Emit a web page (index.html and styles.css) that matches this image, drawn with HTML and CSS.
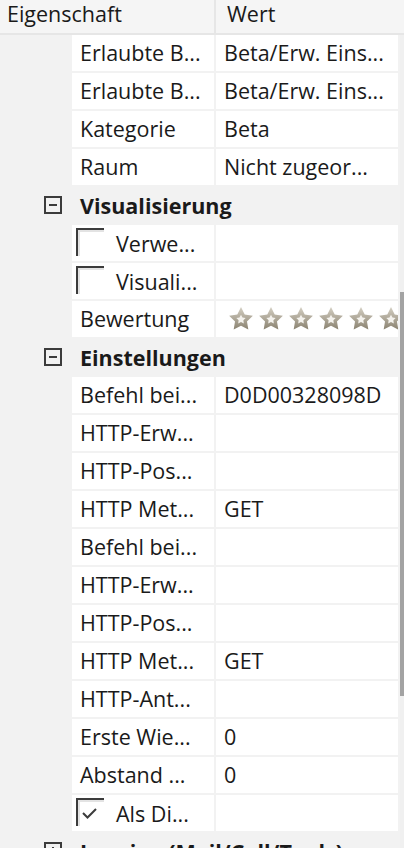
FILE: index.html
```html
<!DOCTYPE html>
<html lang="de">
<head>
<meta charset="utf-8">
<title>Eigenschaften</title>
<link rel="stylesheet" href="styles.css">
</head>
<body>
<div class="grid">
  <div class="header">
    <div class="h-name">Eigenschaft</div>
    <div class="h-val">Wert</div>
  </div>
  <div class="main">
    <div class="rows">
      <div class="row"><div class="name">Erlaubte B...</div><div class="val">Beta/Erw. Eins...</div></div>
      <div class="row"><div class="name">Erlaubte B...</div><div class="val">Beta/Erw. Eins...</div></div>
      <div class="row"><div class="name">Kategorie</div><div class="val">Beta</div></div>
      <div class="row"><div class="name">Raum</div><div class="val">Nicht zugeor...</div></div>
      <div class="group"><span class="toggle minus"></span><span class="gtitle">Visualisierung</span></div>
      <div class="row"><div class="name check-name"><span class="cb"></span><span>Verwe...</span></div><div class="val"></div></div>
      <div class="row"><div class="name check-name"><span class="cb"></span><span>Visuali...</span></div><div class="val"></div></div>
      <div class="row"><div class="name">Bewertung</div><div class="val stars">
        <svg class="star" viewBox="0 0 24 24"><use href="#st"/></svg>
        <svg class="star" viewBox="0 0 24 24"><use href="#st"/></svg>
        <svg class="star" viewBox="0 0 24 24"><use href="#st"/></svg>
        <svg class="star" viewBox="0 0 24 24"><use href="#st"/></svg>
        <svg class="star" viewBox="0 0 24 24"><use href="#st"/></svg>
        <svg class="star" viewBox="0 0 24 24"><use href="#st"/></svg>
      </div></div>
      <div class="group"><span class="toggle minus"></span><span class="gtitle">Einstellungen</span></div>
      <div class="row"><div class="name">Befehl bei...</div><div class="val">D0D00328098D</div></div>
      <div class="row"><div class="name">HTTP-Erw...</div><div class="val"></div></div>
      <div class="row"><div class="name">HTTP-Pos...</div><div class="val"></div></div>
      <div class="row"><div class="name">HTTP Met...</div><div class="val">GET</div></div>
      <div class="row"><div class="name">Befehl bei...</div><div class="val"></div></div>
      <div class="row"><div class="name">HTTP-Erw...</div><div class="val"></div></div>
      <div class="row"><div class="name">HTTP-Pos...</div><div class="val"></div></div>
      <div class="row"><div class="name">HTTP Met...</div><div class="val">GET</div></div>
      <div class="row"><div class="name">HTTP-Ant...</div><div class="val"></div></div>
      <div class="row"><div class="name">Erste Wie...</div><div class="val">0</div></div>
      <div class="row"><div class="name">Abstand ...</div><div class="val">0</div></div>
      <div class="row"><div class="name check-name"><span class="cb checked"><svg viewBox="0 0 28 28"><path d="M7 15 L11.5 19.5 L20 11" fill="none" stroke="#3c3c3c" stroke-width="2"/></svg></span><span>Als Di...</span></div><div class="val"></div></div>
      <div class="group"><span class="toggle plus"></span><span class="gtitle">Logging (Mail/Call/Tools)</span></div>
    </div>
    <div class="scrollbar"><div class="thumb"></div></div>
  </div>
</div>
<svg class="defs" width="0" height="0">
  <defs>
    <linearGradient id="sg" x1="0" y1="0" x2="0" y2="1">
      <stop offset="0" stop-color="#d4cfc3"/>
      <stop offset="1" stop-color="#8a8270"/>
    </linearGradient>
    <g id="st">
      <path d="M12 1 L15.41 7.81 L22.94 8.95 L17.52 14.29 L18.76 21.8 L12 18.3 L5.24 21.8 L6.48 14.29 L1.06 8.95 L8.59 7.81 Z" fill="url(#sg)"/>
      <path d="M12 8 L13.4 10.6 L16.3 11.1 L14.2 13.2 L14.6 16.1 L12 14.8 L9.4 16.1 L9.8 13.2 L7.7 11.1 L10.6 10.6 Z" fill="#f4f2ed"/>
    </g>
  </defs>
</svg>
</body>
</html>
```
FILE: styles.css
```css
html, body {
  margin: 0;
  padding: 0;
  background: #f3f3f3;
}
body {
  width: 404px;
  height: 848px;
  overflow: hidden;
  font-family: "Open Sans", "Noto Sans", sans-serif;
  font-size: 21.5px;
  color: #1a1a1a;
}
.grid {
  display: flex;
  flex-direction: column;
  height: 848px;
}
.header {
  display: grid;
  grid-template-columns: 216px 188px;
  height: 33px;
  border-bottom: 2px solid #e6e6e6;
  background: #f5f5f5;
  flex: none;
}
.h-name {
  padding-left: 7px;
  line-height: 28px;
  border-right: 2px solid #e6e6e6;
}
.h-val {
  padding-left: 11px;
  line-height: 28px;
}
.main {
  display: flex;
  flex: 1;
  min-height: 0;
}
.rows {
  width: 398px;
  padding-right: 2px;
  display: flex;
  flex-direction: column;
  gap: 2px;
  background: #f2f2f2;
  overflow: hidden;
}
.row {
  display: grid;
  grid-template-columns: 72px 144px 182px;
  height: 36px;
  flex: none;
}
.row .name {
  grid-column: 2;
  margin-right: 2px;
  background: #fff;
  padding-left: 8px;
  line-height: 35px;
  white-space: nowrap;
  overflow: hidden;
}
.row .val {
  grid-column: 3;
  background: #fff;
  padding-left: 8px;
  line-height: 35px;
  white-space: nowrap;
  overflow: hidden;
}
.check-name {
  display: flex;
  align-items: center;
  gap: 12px;
}
.row .check-name {
  padding-left: 4px;
}
.cb {
  flex: none;
  width: 28px;
  height: 28px;
  box-sizing: border-box;
  border-top: 2px solid #3c3c3c;
  border-left: 2px solid #3c3c3c;
  box-shadow: inset 2px 2px 0 #e3e3e3;
  align-self: flex-start;
  margin-top: 3px;
  position: relative;
}
.cb svg {
  position: absolute;
  left: -2px;
  top: -2px;
  width: 28px;
  height: 28px;
}
.stars {
  display: flex;
  align-items: center;
  gap: 4px;
}
.row .stars {
  padding-left: 12px;
}
.star {
  flex: none;
  width: 26px;
  height: 26px;
}
.group {
  height: 36px;
  flex: none;
  display: flex;
  align-items: center;
  background: #f2f2f2;
}
.toggle {
  flex: none;
  width: 18px;
  height: 18px;
  box-sizing: border-box;
  border: 2px solid #3c3c3c;
  margin-left: 44px;
  margin-right: 18px;
  position: relative;
}
.toggle::before {
  content: "";
  position: absolute;
  left: 3px;
  top: 6px;
  width: 8px;
  height: 2px;
  background: #3c3c3c;
}
.plus::after {
  content: "";
  position: absolute;
  left: 6px;
  top: 3px;
  width: 2px;
  height: 8px;
  background: #3c3c3c;
}
.gtitle {
  font-weight: bold;
  white-space: nowrap;
  line-height: 35px;
}
.scrollbar {
  width: 4px;
  flex: none;
  background: #f0f0f0;
  display: flex;
  flex-direction: column;
}
.thumb {
  margin-top: 257px;
  height: 404px;
  background: #a3a3a3;
}
.defs {
  position: absolute;
}
```
